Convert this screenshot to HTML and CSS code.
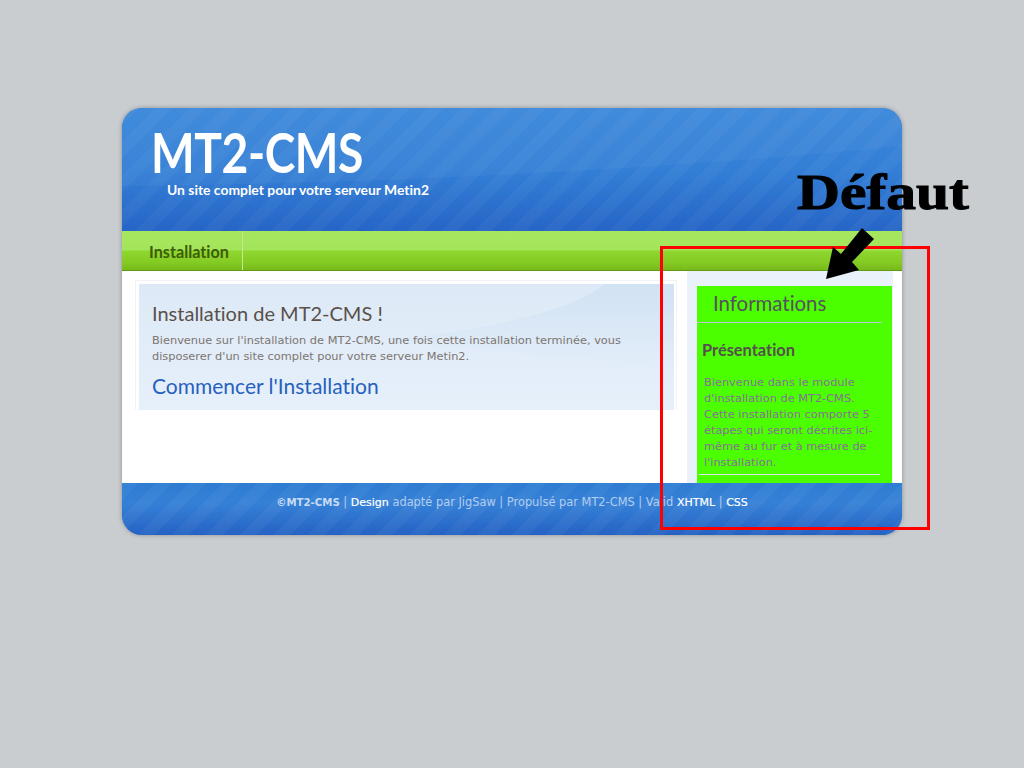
FILE: index.html
```html
<!DOCTYPE html>
<html lang="fr">
<head>
<meta charset="utf-8">
<title>MT2-CMS</title>
<link rel="stylesheet" href="styles.css">
</head>
<body>
<div class="page">
  <header class="header">
    <svg class="swoosh" viewBox="0 0 780 123" preserveAspectRatio="none" aria-hidden="true"><path d="M0 78 C200 76 500 66 780 38 L780 0 L0 0 Z" fill="#ffffff" fill-opacity="0.035"/></svg>
    <h1 class="logo">MT2-CMS</h1>
    <p class="slogan">Un site complet pour votre serveur Metin2</p>
  </header>
  <nav class="nav"><a class="nav-item">Installation</a></nav>
  <div class="content">
    <main class="main">
      <div class="panel-frame">
        <div class="panel">
          <svg class="panel-swoosh" viewBox="0 0 535 126" preserveAspectRatio="none" aria-hidden="true">
            <defs><linearGradient id="sw" x1="0" y1="0" x2="0" y2="1"><stop offset="0" stop-color="#bcd6f0" stop-opacity="0.35"/><stop offset="1" stop-color="#bcd6f0" stop-opacity="0"/></linearGradient></defs>
            <path d="M535 0 L465 0 C440 24 360 44 250 56 L535 84 Z" fill="url(#sw)"/>
          </svg>
          <h2 class="panel-title">Installation de MT2-CMS !</h2>
          <p class="panel-text">Bienvenue sur l'installation de MT2-CMS, une fois cette installation terminée, vous disposerer d'un site complet pour votre serveur Metin2.</p>
          <h2 class="panel-link">Commencer l'Installation</h2>
        </div>
      </div>
    </main>
    <aside class="side">
      <div class="box">
        <h3 class="box-title">Informations</h3>
        <h4 class="box-head">Présentation</h4>
        <p class="box-text">Bienvenue dans le module d'installation de MT2-CMS. Cette installation comporte 5 étapes qui seront décrites ici-même au fur et à mesure de l'installation.</p>
      </div>
    </aside>
  </div>
  <footer class="footer">
    <p class="foot-text"><b class="strong-dim">©MT2-CMS</b> | <b class="strong">Design</b> adapté par JigSaw | Propulsé par MT2-CMS | Valid <b class="strong">XHTML</b> | <b class="strong">CSS</b></p>
  </footer>
</div>
<div class="red-frame"></div>
<div class="defaut">Défaut</div>
<svg class="arrow" width="52" height="54" viewBox="0 0 52 54" aria-hidden="true"><path d="M37 0 L49 11 L27 34 L34 42 L1 51 L8 19 L16 26 Z" fill="#000"/></svg>
</body>
</html>
```
FILE: styles.css
```css
* { box-sizing: border-box; }
html, body { margin: 0; padding: 0; height: 768px; overflow: hidden; }
body { background: #c9cdd0; font-family: "DejaVu Sans", Verdana, sans-serif; position: relative; font-variant-ligatures: none; }
h1, h2, h3, h4, p { margin: 0; font-weight: normal; }

.page {
  width: 780px;
  margin: 108px 0 0 122px;
  border-radius: 20px;
  overflow: hidden;
  box-shadow: 0 0 4px rgba(90, 90, 90, 0.55);
  background: #fff;
}

.header, .footer {
  position: relative;
  background-color: #2a6fcb;
}
.header {
  height: 123px;
  padding: 19px 0 0 29px;
  background-image:
    repeating-linear-gradient(135deg, rgba(255,255,255,0.035) 0 12px, rgba(255,255,255,0) 12px 24px),
    linear-gradient(180deg, #3a87da 0%, #337fd6 50%, #2665c6 100%);
}
.swoosh { position: absolute; left: 0; top: 0; width: 100%; height: 100%; }
.logo {
  position: relative;
  width: 260px;
  font-family: "Lato", sans-serif;
  font-weight: 700;
  font-size: 55px;
  line-height: 50px;
  color: #fff;
  letter-spacing: -0.5px;
  transform: scaleX(0.84);
  transform-origin: left center;
}
.slogan {
  position: relative;
  margin: 4px 0 0 16px;
  font-family: "Lato", sans-serif;
  font-weight: 700;
  font-size: 13.9px;
  line-height: 18px;
  color: #fff;
}

.nav {
  height: 40px;
  display: flex;
  border-bottom: 1px solid #5f9a12;
  background: linear-gradient(180deg, #a6e75f 0%, #a3e55a 48%, #8ed72f 52%, #84cb24 80%, #79b91c 100%);
}
.nav-item {
  width: 121px;
  padding: 0 0 0 27px;
  border-right: 1px solid #c4e88e;
  font-family: "Lato", sans-serif;
  font-weight: 700;
  font-size: 16.2px;
  line-height: 41px;
  color: #3d5c08;
}

.content { height: 212px; display: flex; background: #fff; }
.main { width: 565px; padding: 9px 0 0 13px; }
.panel-frame {
  width: 542px;
  height: 130px;
  padding: 3px 2px 0 3px;
  border: 1px solid #f0f2f4;
  border-bottom: 0;
}
.panel {
  position: relative;
  width: 535px;
  height: 126px;
  padding: 17px 13px 0 13px;
  background: linear-gradient(180deg, #dde9f6 0%, #e6f0fb 100%);
}
.panel-swoosh { position: absolute; left: 0; top: 0; width: 100%; height: 100%; }
.panel-title {
  position: relative;
  font-family: "Lato", sans-serif;
  font-size: 20px;
  line-height: 24px;
  color: #59504a;
}
.panel-text {
  position: relative;
  margin-top: 7px;
  font-size: 11.37px;
  line-height: 16px;
  color: #7c7570;
}
.panel-link {
  position: relative;
  margin-top: 10px;
  font-family: "Lato", sans-serif;
  font-size: 21px;
  line-height: 24px;
  color: #2761c0;
}

.side { width: 206px; margin-right: 9px; background: #e9f1fb; padding: 15px 1px 0 10px; }
.box { height: 197px; background: #4cff00; padding-top: 5px; }
.box-title {
  margin-right: 10px;
  padding: 0 0 7px 16px;
  border-bottom: 1px solid #b8c4d8;
  font-family: "Lato", sans-serif;
  font-size: 20.4px;
  line-height: 24px;
  color: #595060;
}
.box-head {
  margin: 18px 0 0 5px;
  font-family: "Lato", sans-serif;
  font-weight: 700;
  font-size: 16.4px;
  line-height: 18px;
  color: #55504f;
}
.box-text {
  margin: 15px 12px 0 2px;
  padding: 0 0 4px 5px;
  border-bottom: 1px solid #dfe8e8;
  font-size: 11.34px;
  line-height: 16px;
  color: #86709a;
}

.footer {
  height: 52px;
  padding-top: 11px;
  background-image:
    repeating-linear-gradient(135deg, rgba(255,255,255,0.04) 0 12px, rgba(255,255,255,0) 12px 24px),
    linear-gradient(180deg, #2e7dd3 0%, #3580d6 40%, #2562c4 100%);
}
.foot-text {
  text-align: center;
  font-size: 11.4px;
  line-height: 16px;
  color: #b4cdf0;
}
.strong { color: #fff; font-weight: normal; font-size: 11px; -webkit-text-stroke: 0.2px #fff; }
.strong-dim { color: #c8dcf5; font-weight: 700; font-size: 10.2px; }

.red-frame {
  position: absolute;
  left: 660px;
  top: 246px;
  width: 270px;
  height: 284px;
  border: 3px solid #ff0000;
}
.defaut {
  position: absolute;
  left: 797px;
  top: 164px;
  font-family: "Liberation Serif", serif;
  font-weight: 700;
  font-size: 50px;
  line-height: 56px;
  color: #000;
  -webkit-text-stroke: 1px #000;
  transform: scaleX(1.19);
  transform-origin: left center;
}
.arrow { position: absolute; left: 825px; top: 228px; }
```
